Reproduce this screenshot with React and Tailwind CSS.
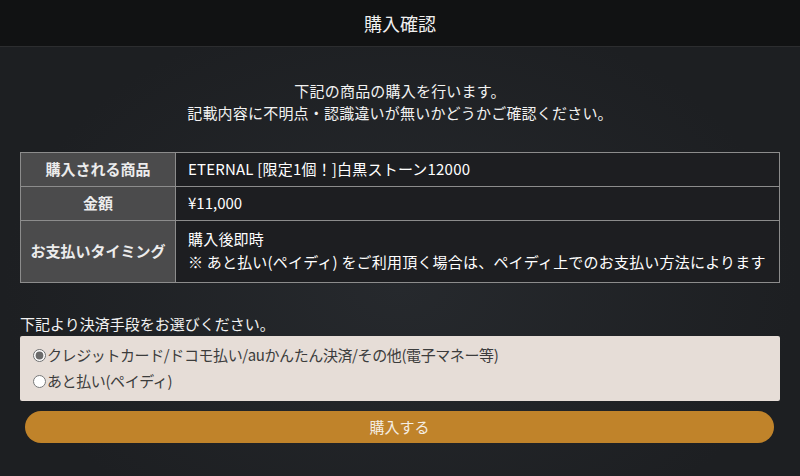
import { useState } from 'react';

const font = { fontFamily: '"Noto Sans CJK JP", "Liberation Sans", sans-serif' };

export default function App() {
  const [method, setMethod] = useState('credit');

  return (
    <div
      className="w-[800px] h-[476px] overflow-hidden text-white bg-[radial-gradient(ellipse_at_50%_60%,#26292d_0%,#1d1f22_70%)]"
      style={font}
    >
      {/* header */}
      <header className="h-[47px] bg-[#111213] border-b border-[#2c2d2f] flex items-center justify-center">
        <h1 className="text-[18px] leading-none text-[#f0f0f0]">購入確認</h1>
      </header>

      <main className="px-[20px]">
        <div className="pt-[33px] text-center text-[15px] leading-[22px] tracking-[0.2px] text-[#f2f2f2]">
          <p>下記の商品の購入を行います。</p>
          <p>記載内容に不明点・認識違いが無いかどうかご確認ください。</p>
        </div>

        <table className="mt-[28px] w-[760px] border-collapse text-[15px] border border-[#8c8c8c]">
          <tbody>
            <tr className="h-[34px]">
              <th className="w-[155px] bg-[#4b4b4c] border border-[#8c8c8c] font-bold text-[#ececec]">購入される商品</th>
              <td className="px-[12px] border border-[#8c8c8c] bg-[#1d1e21] tracking-[0.2px]">ETERNAL [限定1個！]白黒ストーン12000</td>
            </tr>
            <tr className="h-[34px]">
              <th className="bg-[#4b4b4c] border border-[#8c8c8c] font-bold text-[#ececec]">金額</th>
              <td className="px-[12px] border border-[#8c8c8c] bg-[#1d1e21]">¥11,000</td>
            </tr>
            <tr className="h-[62px]">
              <th className="bg-[#4b4b4c] border border-[#8c8c8c] font-bold text-[#ececec]">お支払いタイミング</th>
              <td className="px-[12px] pb-[4px] border border-[#8c8c8c] bg-[#1d1e21] leading-[23px] tracking-[0.2px]">
                <div>購入後即時</div>
                <div>※ あと払い(ペイディ) をご利用頂く場合は、ペイディ上でのお支払い方法によります</div>
              </td>
            </tr>
          </tbody>
        </table>

        <p className="mt-[31px] text-[15px] leading-[20px] text-[#f2f2f2]">下記より決済手段をお選びください。</p>

        <div className="mt-[2px] h-[65px] rounded-[2px] bg-[#e6ddd7] px-[13px] pt-[6px] text-[15px] tracking-[-0.4px] text-[#3c3c3c]">
          <label className="flex items-center h-[26px] cursor-pointer">
            <input
              type="radio"
              name="pay"
              checked={method === 'credit'}
              onChange={() => setMethod('credit')}
              className="w-[13px] h-[13px] m-0 mr-[1px] accent-[#6b6b6b]"
            />
            <span>クレジットカード/ドコモ払い/auかんたん決済/その他(電子マネー等)</span>
          </label>
          <label className="flex items-center h-[26px] cursor-pointer">
            <input
              type="radio"
              name="pay"
              checked={method === 'paidy'}
              onChange={() => setMethod('paidy')}
              className="w-[13px] h-[13px] m-0 mr-[1px] accent-[#6b6b6b]"
            />
            <span>あと払い(ペイディ)</span>
          </label>
        </div>

        <button className="mt-[10px] ml-[5px] w-[749px] h-[32px] rounded-full bg-[#c0832a] text-[15px] text-[#f4ede2]">
          購入する
        </button>
      </main>
    </div>
  );
}
